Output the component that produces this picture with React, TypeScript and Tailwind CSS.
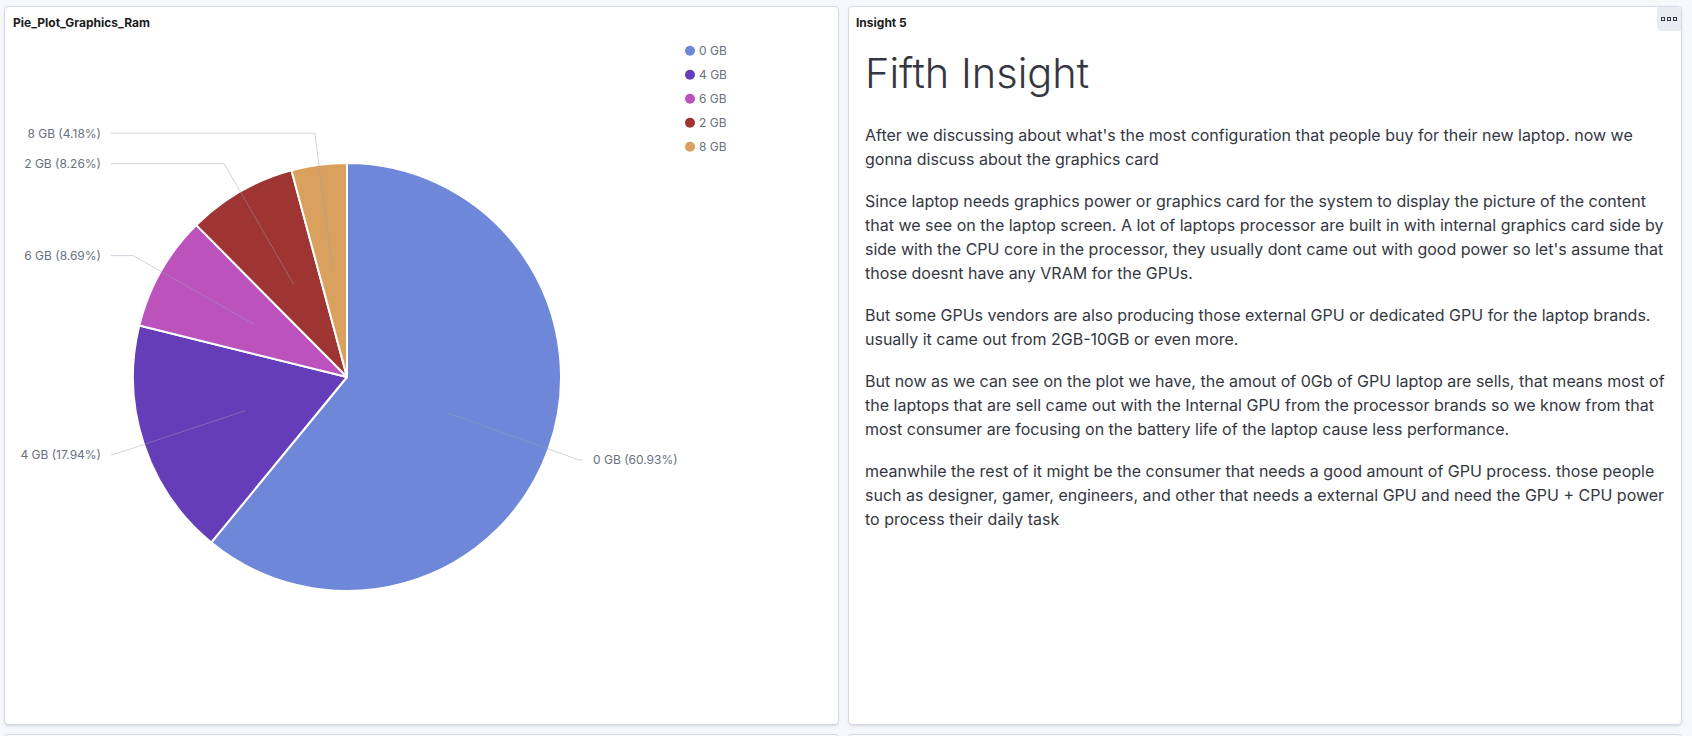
import React from 'react';

type Slice = { label: string; pct: number; color: string };

const slices: Slice[] = [
  { label: '0 GB', pct: 60.93, color: '#6f87d8' },
  { label: '4 GB', pct: 17.94, color: '#663db8' },
  { label: '6 GB', pct: 8.69, color: '#bc52bc' },
  { label: '2 GB', pct: 8.26, color: '#9e3533' },
  { label: '8 GB', pct: 4.18, color: '#daa05d' },
];

const CX = 347;
const CY = 377;
const R = 214;

function pt(deg: number, r: number) {
  const a = (deg * Math.PI) / 180;
  return { x: CX + r * Math.sin(a), y: CY - r * Math.cos(a) };
}

function PieChart() {
  let start = 0;
  const parts = slices.map((s) => {
    const end = start + (s.pct / 100) * 360;
    const mid = (start + end) / 2;
    const a = pt(start, R);
    const b = pt(end, R);
    const large = end - start > 180 ? 1 : 0;
    const d = `M ${CX} ${CY} L ${a.x} ${a.y} A ${R} ${R} 0 ${large} 1 ${b.x} ${b.y} Z`;
    const inner = pt(mid, R / 2);
    const outer = pt(mid, R + 32);
    const right = outer.x > CX;
    const hx = right ? CX + 236 : CX - 236;
    start = end;
    return { s, d, inner, outer, right, hx };
  });

  return (
    <svg width={833} height={687} viewBox="5 37 833 687" className="block">
      {parts.map((p) => (
        <path key={p.s.label} d={p.d} fill={p.s.color} stroke="#ffffff" strokeWidth={2} strokeLinejoin="round" />
      ))}
      {parts.map((p) => (
        <g key={'l' + p.s.label}>
          <polyline
            points={`${p.inner.x},${p.inner.y} ${p.outer.x},${p.outer.y} ${p.hx},${p.outer.y}`}
            fill="none"
            stroke="#98a2b3"
            strokeOpacity={0.45}
            strokeWidth={1}
          />
          <text
            x={p.right ? p.hx + 10 : p.hx - 10}
            y={p.outer.y}
            textAnchor={p.right ? 'start' : 'end'}
            dominantBaseline="central"
            fontFamily="Inter, sans-serif"
            fontSize={12}
            fill="#69707d"
          >
            {p.s.label} ({p.s.pct.toFixed(2)}%)
          </text>
        </g>
      ))}
      {slices.map((s, i) => (
        <g key={'lg' + s.label}>
          <circle cx={690} cy={50.7 + i * 24} r={5} fill={s.color} />
          <text
            x={699}
            y={50.7 + i * 24}
            dominantBaseline="central"
            fontFamily="Inter, sans-serif"
            fontSize={12}
            fill="#69707d"
          >
            {s.label}
          </text>
        </g>
      ))}
    </svg>
  );
}

const paragraphs = [
  "After we discussing about what's the most configuration that people buy for their new laptop. now we gonna discuss about the graphics card",
  "Since laptop needs graphics power or graphics card for the system to display the picture of the content that we see on the laptop screen. A lot of laptops processor are built in with internal graphics card side by side with the CPU core in the processor, they usually dont came out with good power so let's assume that those doesnt have any VRAM for the GPUs.",
  'But some GPUs vendors are also producing those external GPU or dedicated GPU for the laptop brands. usually it came out from 2GB-10GB or even more.',
  'But now as we can see on the plot we have, the amout of 0Gb of GPU laptop are sells, that means most of the laptops that are sell came out with the Internal GPU from the processor brands so we know from that most consumer are focusing on the battery life of the laptop cause less performance.',
  'meanwhile the rest of it might be the consumer that needs a good amount of GPU process. those people such as designer, gamer, engineers, and other that needs a external GPU and need the GPU + CPU power to process their daily task',
];

const panel =
  'relative bg-white border border-[#d3dae6] rounded-[4px] shadow-[0_2px_2px_-1px_rgba(152,162,179,0.3),0_1px_5px_-2px_rgba(152,162,179,0.3)] overflow-hidden';

export default function App() {
  return (
    <div className="h-[736px] overflow-hidden bg-[#f7f8fc] font-['Inter',sans-serif] text-[#343741]">
      <div className="grid grid-cols-[835px_834px] gap-x-[9px] gap-y-[9px] pl-[4px] pt-[6px]">
        <div className={panel + ' h-[719px]'}>
          <div className="h-[30px] px-[8px] pt-[8px] text-[12px] leading-[16px] font-bold text-[#1a1c21]">
            Pie_Plot_Graphics_Ram
          </div>
          <PieChart />
        </div>

        <div className={panel + ' h-[719px]'}>
          <div className="h-[30px] px-[7px] pt-[8px] text-[12px] leading-[16px] font-bold text-[#1a1c21]">
            Insight 5
          </div>
          <button className="absolute top-0 right-0 w-[24px] h-[24px] bg-[#e9edf3] rounded-bl-[4px] flex items-center justify-center gap-[2px]">
            <span className="w-[4px] h-[4px] border-[1.5px] border-[#343741]" />
            <span className="w-[4px] h-[4px] border-[1.5px] border-[#343741]" />
            <span className="w-[4px] h-[4px] border-[1.5px] border-[#343741]" />
          </button>
          <div className="px-[16px] pt-[11px]">
            <h1 className="text-[41.5px] leading-[50px] font-light mb-[25px] text-[#343741]">Fifth Insight</h1>
            <div className="flex flex-col gap-[18px] text-[16px] leading-[24px]">
              {paragraphs.map((t, i) => (
                <p key={i}>{t}</p>
              ))}
            </div>
          </div>
        </div>

        <div className={panel + ' h-[300px]'} />
        <div className={panel + ' h-[300px]'} />
      </div>
    </div>
  );
}
